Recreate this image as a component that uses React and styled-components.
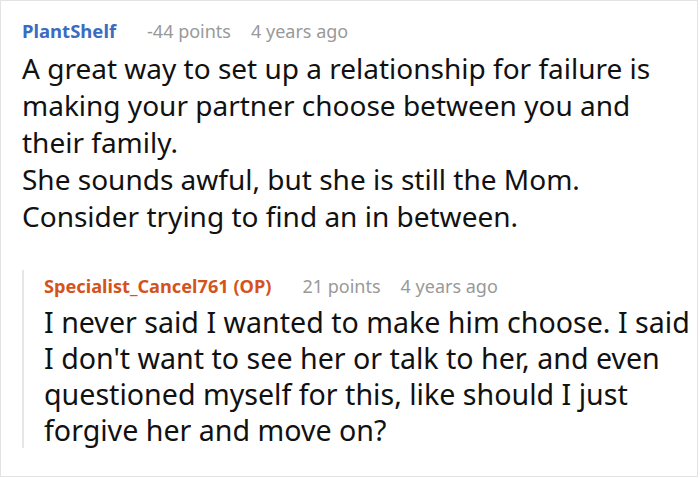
import React from "react";
import styled, { createGlobalStyle } from "styled-components";

const Global = createGlobalStyle`
  html, body { margin: 0; padding: 0; background: #fff; }
  body { font-family: "Noto Sans", "Open Sans", sans-serif; }
`;

const Card = styled.div`
  box-sizing: border-box;
  width: 698px;
  height: 477px;
  border: 1px solid #e3e3e3;
  padding: 14px 0 0 21px;
  overflow: hidden;
`;

const Meta = styled.div`
  display: flex;
  align-items: baseline;
  font-size: 18px;
  line-height: 32px;
  color: #999;
  white-space: nowrap;
`;

const Author = styled.span`
  font-weight: 700;
  font-size: ${(p) => (p.$reply ? "18.2px" : "18.5px")};
  color: ${(p) => p.$color};
  margin-right: 31px;
`;

const Stat = styled.span`
  margin-right: 20px;
`;

const Body = styled.div`
  font-size: ${(p) => (p.$reply ? "28.6px" : "28px")};
  line-height: ${(p) => (p.$reply ? "36px" : "37px")};
  color: #111;
  margin-top: ${(p) => (p.$reply ? "2px" : "3px")};
`;

const Reply = styled.div`
  margin-top: 35px;
  border-left: 2px solid #e6e6e6;
  padding-left: 20px;
`;

function Comment({ author, color, points, age, reply, children }) {
  return (
    <>
      <Meta>
        <Author $color={color} $reply={reply}>{author}</Author>
        <Stat>{points}</Stat>
        <Stat>{age}</Stat>
      </Meta>
      <Body $reply={reply}>{children}</Body>
    </>
  );
}

export default function App() {
  return (
    <>
      <Global />
      <Card>
        <Comment author="PlantShelf" color="#3b6cbf" points="-44 points" age="4 years ago">
          A great way to set up a relationship for failure is making your partner choose between you and their family.
          <br />
          She sounds awful, but she is still the Mom. Consider trying to find an in between.
        </Comment>
        <Reply>
          <Comment
            author="Specialist_Cancel761 (OP)"
            color="#d4531c"
            points="21 points"
            age="4 years ago"
            reply
          >
            I never said I wanted to make him choose. I said I don't want to see her or talk to her, and even
            questioned myself for this, like should I just forgive her and move on?
          </Comment>
        </Reply>
      </Card>
    </>
  );
}
